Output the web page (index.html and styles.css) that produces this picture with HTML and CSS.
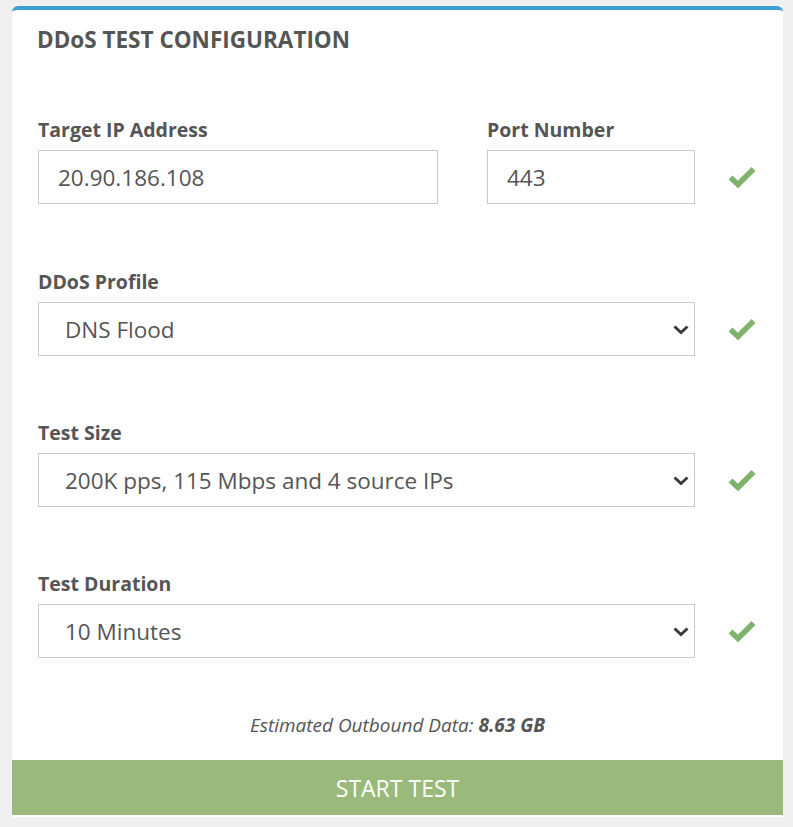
FILE: index.html
```html
<!DOCTYPE html>
<html lang="en">
<head>
<meta charset="utf-8">
<title>DDoS Test Configuration</title>
<link rel="stylesheet" href="styles.css">
</head>
<body>
<div class="card">
  <h2 class="title">DDoS TEST CONFIGURATION</h2>
  <form class="form">
    <div class="row row-first">
      <div class="fields fields-split">
        <div class="field">
          <label class="label" for="ip">Target IP Address</label>
          <input class="control" id="ip" type="text" value="20.90.186.108">
        </div>
        <div class="field">
          <label class="label" for="port">Port Number</label>
          <input class="control" id="port" type="text" value="443">
        </div>
      </div>
      <span class="check"><svg width="28" height="22" viewBox="0 0 28 22"><path d="M2.5 11.5 L10 18.5 L25.5 3" fill="none" stroke="#7fb36b" stroke-width="5.5"/></svg></span>
    </div>
    <div class="row">
      <div class="fields">
        <div class="field">
          <label class="label" for="profile">DDoS Profile</label>
          <div class="select-wrap">
            <select class="control select" id="profile"><option>DNS Flood</option></select>
            <svg class="chev" width="16" height="10" viewBox="0 0 16 10"><path d="M1.5 1.5 L8 7.5 L14.5 1.5" fill="none" stroke="#3a3a3a" stroke-width="3"/></svg>
          </div>
        </div>
      </div>
      <span class="check"><svg width="28" height="22" viewBox="0 0 28 22"><path d="M2.5 11.5 L10 18.5 L25.5 3" fill="none" stroke="#7fb36b" stroke-width="5.5"/></svg></span>
    </div>
    <div class="row">
      <div class="fields">
        <div class="field">
          <label class="label" for="size">Test Size</label>
          <div class="select-wrap">
            <select class="control select" id="size"><option>200K pps, 115 Mbps and 4 source IPs</option></select>
            <svg class="chev" width="16" height="10" viewBox="0 0 16 10"><path d="M1.5 1.5 L8 7.5 L14.5 1.5" fill="none" stroke="#3a3a3a" stroke-width="3"/></svg>
          </div>
        </div>
      </div>
      <span class="check"><svg width="28" height="22" viewBox="0 0 28 22"><path d="M2.5 11.5 L10 18.5 L25.5 3" fill="none" stroke="#7fb36b" stroke-width="5.5"/></svg></span>
    </div>
    <div class="row">
      <div class="fields">
        <div class="field">
          <label class="label" for="dur">Test Duration</label>
          <div class="select-wrap">
            <select class="control select" id="dur"><option>10 Minutes</option></select>
            <svg class="chev" width="16" height="10" viewBox="0 0 16 10"><path d="M1.5 1.5 L8 7.5 L14.5 1.5" fill="none" stroke="#3a3a3a" stroke-width="3"/></svg>
          </div>
        </div>
      </div>
      <span class="check"><svg width="28" height="22" viewBox="0 0 28 22"><path d="M2.5 11.5 L10 18.5 L25.5 3" fill="none" stroke="#7fb36b" stroke-width="5.5"/></svg></span>
    </div>
  </form>
  <p class="estimate">Estimated Outbound Data: <b>8.63 GB</b></p>
  <button class="start" type="button">START TEST</button>
</div>
</body>
</html>
```
FILE: styles.css
```css
html, body {
  margin: 0;
  padding: 0;
  background: #f0f0f0;
}
body {
  font-family: "Open Sans", "DejaVu Sans", sans-serif;
  color: #555;
  padding: 6px 10px 0 12px;
}
.card {
  width: 771px;
  background: #fff;
  border-top: 4px solid #3d9fd8;
  border-radius: 6px 6px 0 0;
  padding: 16px 0 2px 0;
  box-sizing: border-box;
}
.title {
  margin: 0 0 64px 25px;
  font-size: 22.5px;
  line-height: 28px;
  font-weight: 700;
  color: #555;
}
.form {
  display: flex;
  flex-direction: column;
  gap: 65px;
  padding-left: 26px;
}
.row {
  display: flex;
  align-items: flex-end;
}
.row-first {
  margin-bottom: 1px;
}
.fields {
  width: 657px;
  display: grid;
  grid-template-columns: 1fr;
}
.fields-split {
  grid-template-columns: 400px 208px;
  column-gap: 49px;
}
.field {
  display: flex;
  flex-direction: column;
}
.label {
  font-size: 19.5px;
  line-height: 24px;
  font-weight: 700;
  color: #555;
  margin-bottom: 8px;
}
.control {
  box-sizing: border-box;
  height: 54px;
  width: 100%;
  border: 1px solid #c9c9c9;
  background: #fff;
  font-family: inherit;
  font-size: 22.5px;
  color: #555;
  padding: 0 0 0 19px;
  margin: 0;
  outline: none;
  border-radius: 0;
}
.select-wrap {
  position: relative;
}
.select {
  appearance: none;
  -webkit-appearance: none;
  padding-left: 26px;
}
.chev {
  position: absolute;
  right: 6px;
  top: 23px;
  pointer-events: none;
}
.check {
  height: 54px;
  display: flex;
  align-items: center;
  margin-left: 33px;
}
.check svg {
  display: block;
}
.estimate {
  margin: 55px 0 23px 0;
  text-align: center;
  font-style: italic;
  font-size: 19px;
  line-height: 24px;
  color: #555;
}
.estimate b {
  font-weight: 700;
}
.start {
  display: block;
  width: 100%;
  height: 55px;
  border: 0;
  margin: 0;
  background: #99ba7b;
  color: #fff;
  font-family: inherit;
  font-size: 23px;
  font-weight: 400;
  cursor: pointer;
}
```
